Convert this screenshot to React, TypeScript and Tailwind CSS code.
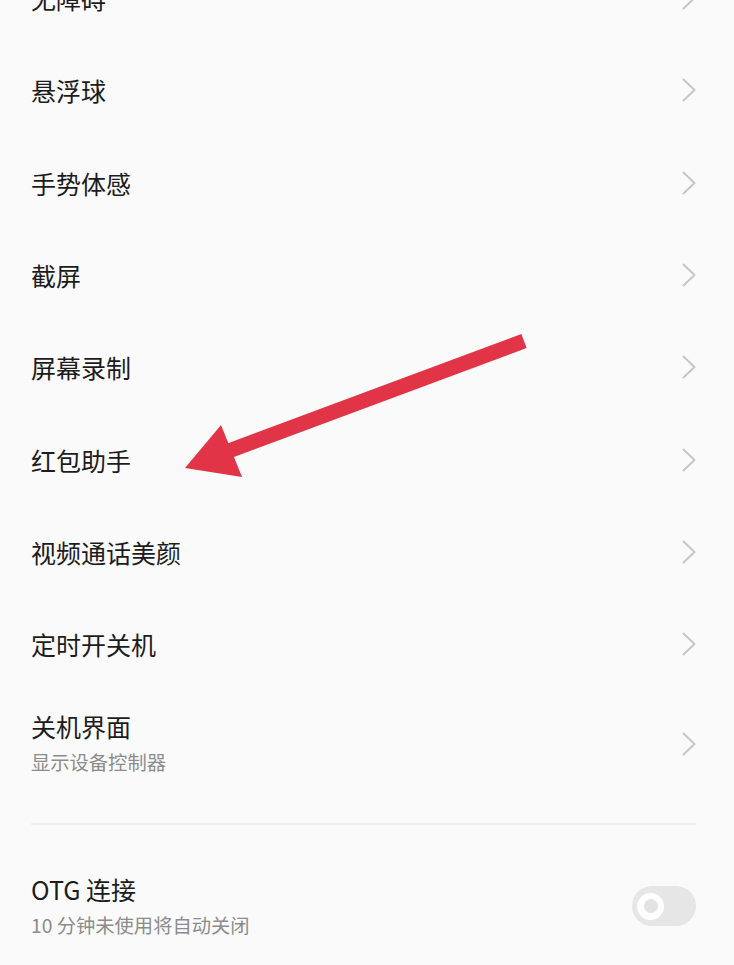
import React from "react";

const items = ["无障碍", "悬浮球", "手势体感", "截屏", "屏幕录制", "红包助手", "视频通话美颜", "定时开关机"];

function Chevron() {
    return (
        <svg width="14" height="24" viewBox="0 0 14 24" fill="none" className="shrink-0">
            <path d="M1.5 1.5 L12.5 12 L1.5 22.5" stroke="#c6c6c6" strokeWidth="2" strokeLinecap="round" strokeLinejoin="round" />
        </svg>
    );
}

export default function App() {
    return (
        <div
            className="relative w-[734px] h-[965px] overflow-hidden bg-[#fafafa]"
            style={{ fontFamily: '"Noto Sans CJK SC", "Noto Sans", sans-serif' }}
        >
            <div className="flex flex-col -mt-[48px] pl-[31px] pr-[38px]">
                {items.map((label) => (
                    <div key={label} className="h-[92.3px] flex items-center justify-between">
                        <span className="text-[25px] leading-[32px] text-[#1c1c1c]">{label}</span>
                        <Chevron />
                    </div>
                ))}

                <div className="h-[108px] flex items-center justify-between">
                    <div className="flex flex-col -mt-[4px]">
                        <span className="text-[25px] leading-[32px] text-[#1c1c1c]">关机界面</span>
                        <span className="mt-[7px] text-[19.3px] leading-[26px] text-[#8c8c8c]">显示设备控制器</span>
                    </div>
                    <Chevron />
                </div>

                <div className="mt-[25px] h-[2px] bg-[#efefef]" />

                <div className="h-[162px] flex items-center justify-between">
                    <div className="flex flex-col -mt-[2px]">
                        <span className="text-[25px] leading-[32px] text-[#1c1c1c]">OTG 连接</span>
                        <span className="mt-[7px] text-[19.3px] leading-[26px] text-[#8c8c8c]">10 分钟未使用将自动关闭</span>
                    </div>
                    <div className="w-[64px] h-[40px] rounded-full bg-[#e6e6e6] flex items-center pl-[5px]">
                        <div className="w-[27px] h-[27px] rounded-full bg-white flex items-center justify-center">
                            <div className="w-[14px] h-[14px] rounded-full bg-[#e3e3e3]" />
                        </div>
                    </div>
                </div>
            </div>

            <svg className="absolute inset-0 pointer-events-none" width="734" height="965" viewBox="0 0 734 965">
                <line x1="524" y1="341" x2="226" y2="452" stroke="#e13446" strokeWidth="15" />
                <polygon points="185,468 221,425 242,477" fill="#e13446" />
            </svg>
        </div>
    );
}
